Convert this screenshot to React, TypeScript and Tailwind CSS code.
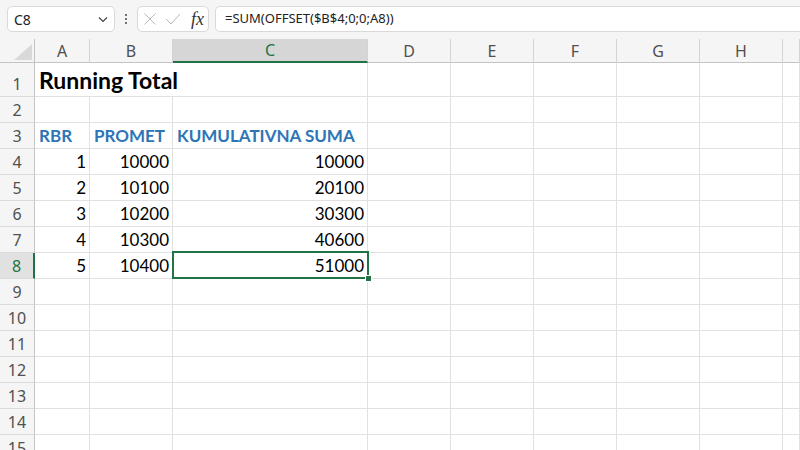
import React from "react";

const colW = [55, 83, 195, 83, 83, 83, 83, 83, 17];
const letters = ["A", "B", "C", "D", "E", "F", "G", "H", ""];

type Cell = { t: string; kind?: "head" | "num" };

const data: Record<number, Cell[]> = {
  3: [
    { t: "RBR", kind: "head" },
    { t: "PROMET", kind: "head" },
    { t: "KUMULATIVNA SUMA", kind: "head" },
  ],
  4: [{ t: "1", kind: "num" }, { t: "10000", kind: "num" }, { t: "10000", kind: "num" }],
  5: [{ t: "2", kind: "num" }, { t: "10100", kind: "num" }, { t: "20100", kind: "num" }],
  6: [{ t: "3", kind: "num" }, { t: "10200", kind: "num" }, { t: "30300", kind: "num" }],
  7: [{ t: "4", kind: "num" }, { t: "10300", kind: "num" }, { t: "40600", kind: "num" }],
  8: [{ t: "5", kind: "num" }, { t: "10400", kind: "num" }, { t: "51000", kind: "num" }],
};

const cellFont = { fontFamily: "Lato, 'Noto Sans', sans-serif" };
const uiFont = { fontFamily: "'Noto Sans', 'Open Sans', sans-serif" };

function RowHeader({ n, h }: { n: number; h: number }) {
  const sel = n === 8;
  return (
    <div
      className={
        "flex shrink-0 items-end justify-center border-b border-[#dadada] " +
        (sel
          ? "w-[35px] border-r-2 border-r-[#217346] bg-[#e1e1e1] text-[#217346]"
          : "w-[35px] border-r border-r-[#c4c4c4] bg-[#f5f5f5] text-[#505050]")
      }
      style={{ height: h, ...uiFont }}
    >
      <span className="text-[16px] leading-[24px]">{n}</span>
    </div>
  );
}

function Row({ n }: { n: number }) {
  const h = n === 1 ? 34 : 26;
  if (n === 1) {
    return (
      <div className="flex shrink-0" style={{ height: h }}>
        <RowHeader n={1} h={h} />
        <div
          className="flex w-[333px] shrink-0 items-end border-b border-r border-[#e1e1e1] pl-[4px] pb-[1px]"
          style={cellFont}
        >
          <span className="whitespace-nowrap text-[23px] font-bold leading-[30px] text-black">Running Total</span>
        </div>
        {colW.slice(3).map((w, i) => (
          <div key={i} className="shrink-0 border-b border-r border-[#e1e1e1]" style={{ width: w }} />
        ))}
      </div>
    );
  }
  const cells = data[n] || [];
  return (
    <div className="flex shrink-0" style={{ height: h }}>
      <RowHeader n={n} h={h} />
      {colW.map((w, i) => {
        const c = cells[i];
        return (
          <div
            key={i}
            className={
              "flex shrink-0 items-end border-b border-r border-[#e1e1e1] " +
              (c && c.kind === "num" ? "justify-end pr-[3px]" : "justify-start pl-[4px]")
            }
            style={{ width: w, ...cellFont }}
          >
            {c ? (
              <span
                className={
                  "whitespace-nowrap leading-[24px] " +
                  (c.kind === "head"
                    ? "text-[17px] font-bold text-[#2e75b6]"
                    : "text-[17px] text-black")
                }
              >
                {c.t}
              </span>
            ) : null}
          </div>
        );
      })}
    </div>
  );
}

export default function App() {
  const rows = Array.from({ length: 15 }, (_, i) => i + 1);
  return (
    <div className="relative h-[450px] w-[800px] overflow-hidden bg-white">
      {/* Formula bar */}
      <div className="flex h-[32px] items-start bg-[#f5f5f5] pt-[6px]" style={uiFont}>
        <div className="ml-[7px] flex h-[26px] w-[108px] items-center justify-between rounded-[5px] border border-[#d9d9d9] bg-white pl-[6px] pr-[5px]">
          <span className="text-[14px] text-[#222]">C8</span>
          <svg width="12" height="12" viewBox="0 0 12 12" fill="none">
            <path d="M2 4.5 L6 8.5 L10 4.5" stroke="#444" strokeWidth="1.2" />
          </svg>
        </div>
        <div className="flex h-[26px] w-[22px] flex-col items-center justify-center gap-[2px]">
          <div className="h-[2px] w-[2px] rounded-full bg-[#444]" />
          <div className="h-[2px] w-[2px] rounded-full bg-[#444]" />
          <div className="h-[2px] w-[2px] rounded-full bg-[#444]" />
        </div>
        <div className="flex h-[26px] w-[72px] items-center rounded-[5px] border border-[#d9d9d9] bg-white pl-[5px]">
          <svg width="14" height="14" viewBox="0 0 14 14" fill="none">
            <path d="M1.5 1.5 L12.5 12.5 M12.5 1.5 L1.5 12.5" stroke="#b8b8b8" strokeWidth="1" />
          </svg>
          <svg width="16" height="14" viewBox="0 0 16 14" fill="none" className="ml-[8px]">
            <path d="M1 7 L6 12 L15 2" stroke="#b8b8b8" strokeWidth="1" />
          </svg>
          <span
            className="ml-[10px] text-[18px] italic leading-none text-[#333]"
            style={{ fontFamily: "'Liberation Serif', 'DejaVu Serif', serif" }}
          >
            fx
          </span>
        </div>
        <div className="ml-[6px] flex h-[26px] flex-1 items-center rounded-l-[5px] border border-r-0 border-[#d9d9d9] bg-white pl-[9px]">
          <span className="text-[13px] text-[#222]">=SUM(OFFSET($B$4;0;0;A8))</span>
        </div>
      </div>

      {/* Column headers */}
      <div className="flex h-[31px] items-end bg-[#f5f5f5]" style={uiFont}>
        <div className="relative h-[24px] w-[35px] shrink-0 border-b border-r border-[#c4c4c4]">
          <svg className="absolute left-[14px] top-[5px]" width="18" height="16" viewBox="0 0 18 16">
            <polygon points="0,16 18,16 18,0" fill="#d9d9d9" />
          </svg>
        </div>
        {colW.map((w, i) => {
          const sel = i === 2;
          return (
            <div
              key={i}
              className={
                "flex h-[24px] shrink-0 items-center justify-center border-r border-r-[#d4d4d4] " +
                (sel
                  ? "border-b-2 border-b-[#217346] bg-[#d6d6d6] text-[#217346]"
                  : "border-b border-b-[#c4c4c4] text-[#505050]")
              }
              style={{ width: w }}
            >
              <span className="text-[16px] leading-none">{letters[i]}</span>
            </div>
          );
        })}
      </div>

      {/* Grid */}
      <div className="relative">
        {rows.map((n) => (
          <Row key={n} n={n} />
        ))}
        {/* Selection */}
        <div className="pointer-events-none absolute left-[172px] top-[188px] h-[28px] w-[197px] border-2 border-[#217346]" />
        <div className="pointer-events-none absolute left-[365px] top-[212px] h-[7px] w-[7px] border border-white bg-[#217346]" />
      </div>
    </div>
  );
}
